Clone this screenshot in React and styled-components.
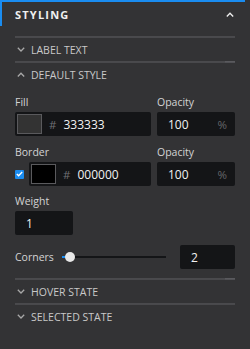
import React from 'react';
import styled, { createGlobalStyle } from 'styled-components';

const Global = createGlobalStyle`
  body {
    margin: 0;
    background: #333335;
    font-family: 'Open Sans', 'Noto Sans', sans-serif;
  }
`;

const Panel = styled.div`
  width: 245px;
  height: 349px;
  background: #333335;
  color: #d2d2d2;
`;

const Header = styled.div`
  height: 24px;
  border-top: 2px solid #1a8cf0;
  border-left: 2px solid #1a8cf0;
  display: flex;
  align-items: center;
  justify-content: space-between;
  padding: 0 11px 0 13px;
`;

const Title = styled.span`
  font-size: 11px;
  font-weight: 700;
  letter-spacing: 1.2px;
  color: #f0f0f0;
`;

const Body = styled.div`
  padding: 10px 10px 0 15px;
`;

const Divider = styled.div`
  height: 1px;
  border-bottom: 1px solid rgba(72, 72, 75, 0.5);
  background: ${p =>
    p.notch
      ? 'linear-gradient(to right, #4a4a4d 0, #4a4a4d 210px, #5a5a5e 210px)'
      : '#4a4a4d'};
`;

const SectionRow = styled.div`
  height: 23px;
  display: flex;
  align-items: center;
  gap: 6px;
  padding-left: 2px;
  font-size: 10.5px;
  color: #c9c9c9;
`;

const FieldGrid = styled.div`
  display: grid;
  grid-template-columns: 136px 78px;
  column-gap: 6px;
  margin-top: 8px;
`;

const Label = styled.div`
  font-size: 10.5px;
  color: #d4d4d4;
  height: 17px;
  line-height: 17px;
  margin-bottom: 1px;
`;

const Field = styled.div`
  display: flex;
  align-items: center;
  gap: 5px;
`;

const InputBox = styled.div`
  height: 24px;
  width: ${p => (p.w ? `${p.w}px` : 'auto')};
  flex: ${p => (p.w ? 'none' : '1')};
  box-sizing: border-box;
  background: #141517;
  border-radius: 2px;
  display: flex;
  align-items: center;
  padding: ${p => (p.swatch ? '0 0 0 2px' : '0 0 0 11px')};
  font-size: 12px;
  color: #f2f2f2;
`;

const Swatch = styled.div`
  width: 25px;
  height: 20px;
  box-sizing: border-box;
  background: ${p => p.color};
  border: 1px solid #5a5a5d;
  margin-right: 7px;
`;

const Hash = styled.span`
  color: #6f7073;
  margin-right: 7px;
  font-size: 11.5px;
`;

const Unit = styled.span`
  margin-left: auto;
  margin-right: 8px;
  color: #66676a;
  font-size: 11.5px;
`;

const Check = styled.div`
  width: 9px;
  height: 9px;
  border-radius: 1px;
  background: #1a8cf0;
  display: flex;
  align-items: center;
  justify-content: center;
  flex: none;
`;

const Block = styled.div`
  margin-top: ${p => p.top || 0}px;
`;

const CornerRow = styled.div`
  display: flex;
  align-items: center;
  margin-top: 10px;
  margin-bottom: 9px;
`;

const CornerLabel = styled.span`
  font-size: 10.5px;
  color: #d4d4d4;
  width: 47px;
`;

const Track = styled.div`
  position: relative;
  width: 104px;
  height: 2px;
  background: #141517;
  margin-right: 14px;
`;

const TrackFill = styled.div`
  height: 2px;
  background: #1a8cf0;
`;

const Thumb = styled.div`
  position: absolute;
  top: -4px;
  left: 3px;
  width: 10px;
  height: 10px;
  border-radius: 50%;
  background: #e8e8e8;
`;

const Chevron = ({ up, color = '#a8a8a8' }) => (
  <svg width={8} height={5} viewBox="0 0 8 5" fill="none">
    <path
      d={up ? 'M0.8 4.5 L4 1.2 L7.2 4.5' : 'M0.8 0.8 L4 4 L7.2 0.8'}
      stroke={color}
      strokeWidth="1.3"
    />
  </svg>
);

function Section({ title, open }) {
  return (
    <SectionRow>
      <Chevron up={open} />
      {title}
    </SectionRow>
  );
}

export default function App() {
  return (
    <Panel>
      <Global />
      <Header>
        <Title>STYLING</Title>
        <Chevron up color="#f0f0f0" />
      </Header>
      <Body>
        <Divider />
        <Section title="LABEL TEXT" />
        <Divider notch />
        <Section title="DEFAULT STYLE" open />
        <FieldGrid>
          <div>
            <Label>Fill</Label>
            <InputBox swatch>
              <Swatch color="#333333" />
              <Hash>#</Hash>333333
            </InputBox>
          </div>
          <div>
            <Label>Opacity</Label>
            <InputBox>
              100<Unit>%</Unit>
            </InputBox>
          </div>
        </FieldGrid>
        <FieldGrid>
          <div>
            <Label>Border</Label>
            <Field>
              <Check>
                <svg width="7" height="6" viewBox="0 0 7 6">
                  <path d="M0.8 3 L2.6 4.8 L6.2 1" stroke="#fff" strokeWidth="1.3" fill="none" />
                </svg>
              </Check>
              <InputBox swatch>
                <Swatch color="#000000" />
                <Hash>#</Hash>000000
              </InputBox>
            </Field>
          </div>
          <div>
            <Label>Opacity</Label>
            <InputBox>
              100<Unit>%</Unit>
            </InputBox>
          </div>
        </FieldGrid>
        <Block top={7}>
          <Label>Weight</Label>
          <InputBox w={58}>1</InputBox>
        </Block>
        <CornerRow>
          <CornerLabel>Corners</CornerLabel>
          <Track>
            <TrackFill style={{ width: '5px' }} />
            <Thumb />
          </Track>
          <InputBox w={55}>2</InputBox>
        </CornerRow>
        <Divider notch />
        <Section title="HOVER STATE" />
        <Divider />
        <Section title="SELECTED STATE" />
      </Body>
    </Panel>
  );
}
